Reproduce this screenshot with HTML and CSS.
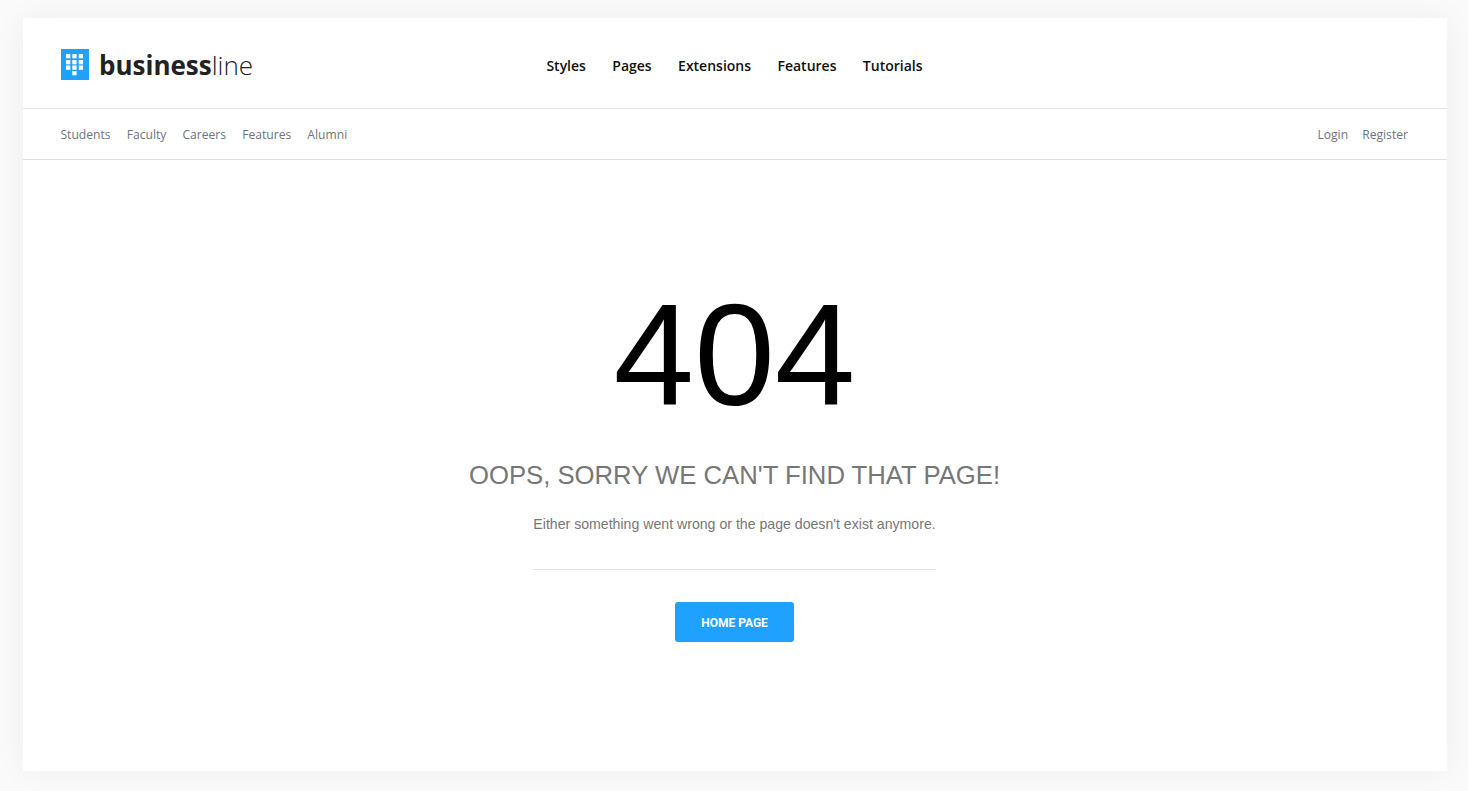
FILE: index.html
```html
<!DOCTYPE html>
<html lang="en">
<head>
<meta charset="utf-8">
<title>404</title>
<link rel="stylesheet" href="styles.css">
</head>
<body>
<div class="card">
  <header class="top">
    <a class="logo" href="#">
      <svg class="logo-icon" width="28" height="31" viewBox="0 0 28 31">
        <rect width="28" height="31" fill="#1fa2ff"/>
        <g fill="#fff">
          <rect x="5" y="5" width="4.3" height="4.3"/><rect x="11.3" y="5" width="4.3" height="4.3"/><rect x="17.7" y="5" width="4.3" height="4.3"/>
          <rect x="5" y="11" width="4.3" height="4.3"/><rect x="11.3" y="11" width="4.3" height="4.3"/><rect x="17.7" y="11" width="4.3" height="4.3"/>
          <rect x="5" y="16.5" width="4.3" height="4.3"/><rect x="11.3" y="16.5" width="4.3" height="4.3"/><rect x="17.7" y="16.5" width="4.3" height="4.3"/>
          <rect x="11.3" y="22" width="4.3" height="4.3"/>
        </g>
      </svg>
      <span class="logo-text"><b>business</b><span class="light">line</span></span>
    </a>
    <nav class="main-nav">
      <a href="#">Styles</a><a href="#">Pages</a><a href="#">Extensions</a><a href="#">Features</a><a href="#">Tutorials</a>
    </nav>
  </header>
  <div class="sub">
    <nav class="sub-nav">
      <a href="#">Students</a><a href="#">Faculty</a><a href="#">Careers</a><a href="#">Features</a><a href="#">Alumni</a>
    </nav>
    <nav class="sub-right">
      <a href="#">Login</a><a href="#">Register</a>
    </nav>
  </div>
  <main class="content">
    <h1 class="code">404</h1>
    <h2 class="title">OOPS, SORRY WE CAN'T FIND THAT PAGE!</h2>
    <p class="msg">Either something went wrong or the page doesn't exist anymore.</p>
    <div class="rule"></div>
    <a class="btn" href="#">HOME PAGE</a>
  </main>
</div>
</body>
</html>
```
FILE: styles.css
```css
* { box-sizing: border-box; }
html, body { height: 100%; }
body {
  margin: 0;
  background: #fafafa;
  padding: 18px 21px 20px 23px;
  font-family: "Liberation Sans", Arial, sans-serif;
  overflow: hidden;
}
a { text-decoration: none; }
.card {
  height: 753px;
  background: #fff;
  box-shadow: 0 0 30px rgba(0, 0, 0, 0.05);
  display: flex;
  flex-direction: column;
}
.top {
  height: 91px;
  border-bottom: 1px solid #e4e4e4;
  display: flex;
  align-items: center;
  padding-left: 38px;
}
.logo { display: flex; align-items: center; gap: 10px; width: 485.4px; color: #222; }
.logo-icon { display: block; flex: none; margin-top: 4px; margin-bottom: 1px; }
.logo-text { font-family: "Open Sans", sans-serif; font-size: 26px; line-height: 31px; color: #222; margin-top: 5px; white-space: nowrap; }
.logo-text b { font-weight: 700; }
.logo-text .light { font-weight: 300; }
.main-nav { display: flex; gap: 26.4px; margin-top: 5px; }
.main-nav a { font-family: "Open Sans", sans-serif; font-weight: 600; font-size: 14px; color: #111; }
.sub {
  height: 51px;
  border-bottom: 1px solid #e0e0e0;
  display: flex;
  align-items: center;
  justify-content: space-between;
  padding: 0 39px 0 37.4px;
}
.sub-nav, .sub-right { display: flex; }
.sub-nav { gap: 16px; }
.sub-right { gap: 14px; }
.sub a { font-family: "Open Sans", sans-serif; font-size: 12.15px; color: #6f7480; }
.content { display: flex; flex-direction: column; align-items: center; padding: 109px 1px 0 0; }
.code { margin: 0; font-size: 145px; line-height: 172px; font-weight: 400; color: #000; }
.title { margin: 19px 0 0; font-size: 25.7px; line-height: 30px; font-weight: 400; color: #777; }
.msg { margin: 24px 0 0; font-size: 14.14px; line-height: 20px; color: #777; }
.rule { width: 403px; height: 1px; background: #e4e4e4; margin-top: 35px; }
.btn {
  margin-top: 32px;
  width: 119px;
  height: 40px;
  padding-top: 1px;
  background: #1fa2ff;
  border-radius: 3px;
  color: #fff;
  font-family: Roboto, "Liberation Sans", sans-serif;
  font-size: 12px;
  font-weight: 700;
  display: flex;
  align-items: center;
  justify-content: center;
}
```
